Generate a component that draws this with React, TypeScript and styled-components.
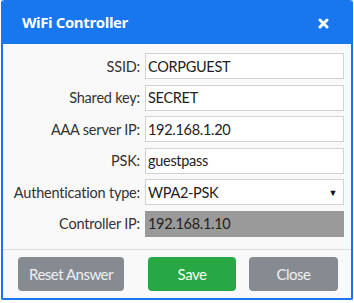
import React from "react";
import styled, { createGlobalStyle } from "styled-components";

const Global = createGlobalStyle`
  html, body { margin: 0; padding: 0; background: #ffffff; }
  body { font-family: Lato, "Open Sans", sans-serif; }
`;

const Dialog = styled.div`
  box-sizing: border-box;
  width: 352px;
  height: 300px;
  margin-left: 1px;
  border: 2px solid #1877ee;
  border-top: none;
  border-radius: 3px 3px 2px 2px;
  background: #f9f9f9;
  display: flex;
  flex-direction: column;
  overflow: hidden;
`;

const Header = styled.div`
  height: 44px;
  background: #1877ee;
  display: flex;
  align-items: center;
  justify-content: space-between;
  padding: 0 22px 0 19px;
  flex: none;
`;

const Title = styled.div`
  color: #ffffff;
  font-family: "Open Sans", sans-serif;
  font-weight: 700;
  font-size: 15px;
  letter-spacing: -0.4px;
`;

const CloseX = styled.svg`
  width: 11px;
  height: 11px;
  margin-top: 2px;
`;

const Body = styled.div`
  padding: 9px 8px 12px 0;
  display: grid;
  grid-template-columns: 137px 199px;
  column-gap: 5px;
  row-gap: 5.6px;
  grid-auto-rows: 26px;
  border-bottom: 1px solid #dedede;
`;

const Label = styled.div`
  text-align: right;
  align-self: center;
  font-size: 14.5px;
  letter-spacing: -0.2px;
  color: #333333;
  white-space: nowrap;
`;

const Field = styled.div<{ $disabled?: boolean }>`
  box-sizing: border-box;
  display: flex;
  align-items: center;
  justify-content: space-between;
  padding: 0 6px 0 2px;
  border: 1px solid ${(p) => (p.$disabled ? "#9a9a9a" : "#d2d2d2")};
  background: ${(p) => (p.$disabled ? "#9a9a9a" : "#ffffff")};
  font-size: 14.5px;
  letter-spacing: -0.3px;
  color: #222222;
  white-space: nowrap;
`;

const Caret = styled.span`
  font-size: 9px;
  color: #111;
`;

const Footer = styled.div`
  flex: 1;
  display: flex;
  align-items: flex-start;
  padding: 7px 0 0 15px;
`;

const Button = styled.button<{ $variant: "gray" | "green"; $w: number; $ml: number }>`
  box-sizing: border-box;
  width: ${(p) => p.$w}px;
  height: 34px;
  margin-left: ${(p) => p.$ml}px;
  border: none;
  border-radius: 4px;
  background: ${(p) => (p.$variant === "green" ? "#28a745" : "#868b92")};
  color: ${(p) => (p.$variant === "green" ? "#f4fff4" : "#eef0f2")};
  font-family: Lato, sans-serif;
  font-size: 15px;
  letter-spacing: -0.5px;
  padding: 0;
`;

const rows: { label: string; value: string; select?: boolean; disabled?: boolean }[] = [
  { label: "SSID:", value: "CORPGUEST" },
  { label: "Shared key:", value: "SECRET" },
  { label: "AAA server IP:", value: "192.168.1.20" },
  { label: "PSK:", value: "guestpass" },
  { label: "Authentication type:", value: "WPA2-PSK", select: true },
  { label: "Controller IP:", value: "192.168.1.10", disabled: true },
];

export default function App() {
  return (
    <>
      <Global />
      <Dialog>
        <Header>
          <Title>WiFi Controller</Title>
          <CloseX viewBox="0 0 11 11">
            <path d="M2 2 L9 9 M9 2 L2 9" stroke="#ffffff" strokeWidth="3" strokeLinecap="round" />
          </CloseX>
        </Header>
        <Body>
          {rows.map((r) => (
            <React.Fragment key={r.label}>
              <Label>{r.label}</Label>
              <Field $disabled={r.disabled}>
                <span>{r.value}</span>
                {r.select && <Caret>▼</Caret>}
              </Field>
            </React.Fragment>
          ))}
        </Body>
        <Footer>
          <Button $variant="gray" $w={106} $ml={0}>Reset Answer</Button>
          <Button $variant="green" $w={88} $ml={24}>Save</Button>
          <Button $variant="gray" $w={89} $ml={13}>Close</Button>
        </Footer>
      </Dialog>
    </>
  );
}
